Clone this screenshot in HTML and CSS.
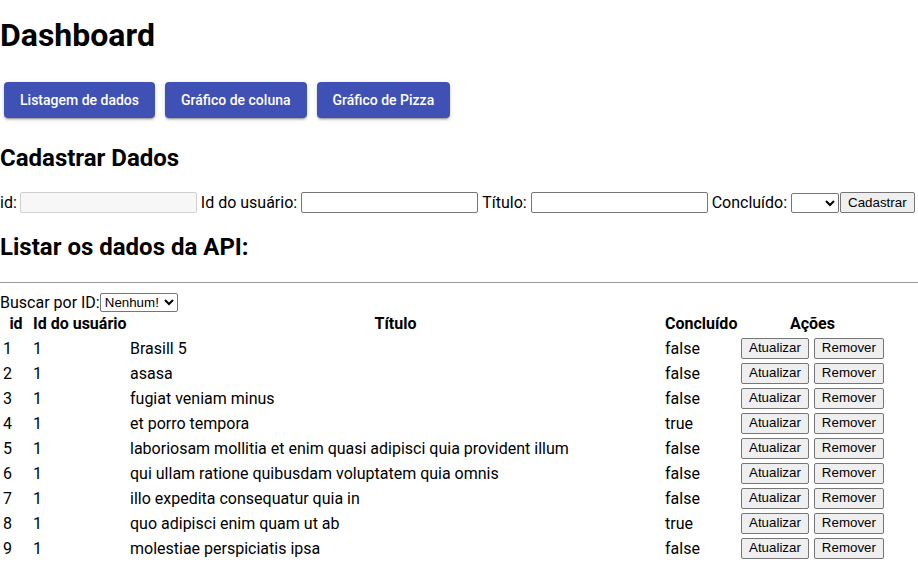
FILE: index.html
```html
<!DOCTYPE html>
<html lang="pt-BR">
<head>
<meta charset="utf-8">
<title>Dashboard</title>
<link rel="stylesheet" href="styles.css">
</head>
<body>
<h1 class="title">Dashboard</h1>
<nav class="nav">
  <button class="mui-btn">Listagem de dados</button>
  <button class="mui-btn">Gráfico de coluna</button>
  <button class="mui-btn">Gráfico de Pizza</button>
</nav>
<h2 class="section-title">Cadastrar Dados</h2>
<form class="form">
  <label class="first">id: <input class="field" type="text" disabled></label>
  <label>Id do usuário: <input class="field" type="text"></label>
  <label>Título: <input class="field" type="text"></label>
  <label>Concluído: <select class="sel-small"><option></option><option>true</option><option>false</option></select></label><button type="button" class="native-btn">Cadastrar</button>
</form>
<h2 class="section-title list-title">Listar os dados da API:</h2>
<hr class="divider">
<div class="search">Buscar por ID:<select class="sel-search"><option>Nenhum!</option></select></div>
<table class="data">
  <colgroup>
    <col class="c-id"><col class="c-user"><col class="c-title"><col class="c-done"><col class="c-act">
  </colgroup>
  <thead>
    <tr><th>id</th><th>Id do usuário</th><th>Título</th><th>Concluído</th><th>Ações</th></tr>
  </thead>
  <tbody>
    <tr><td>1</td><td>1</td><td>Brasill 5</td><td>false</td><td><button class="native-btn">Atualizar</button><button class="native-btn second">Remover</button></td></tr>
    <tr><td>2</td><td>1</td><td>asasa</td><td>false</td><td><button class="native-btn">Atualizar</button><button class="native-btn second">Remover</button></td></tr>
    <tr><td>3</td><td>1</td><td>fugiat veniam minus</td><td>false</td><td><button class="native-btn">Atualizar</button><button class="native-btn second">Remover</button></td></tr>
    <tr><td>4</td><td>1</td><td>et porro tempora</td><td>true</td><td><button class="native-btn">Atualizar</button><button class="native-btn second">Remover</button></td></tr>
    <tr><td>5</td><td>1</td><td>laboriosam mollitia et enim quasi adipisci quia provident illum</td><td>false</td><td><button class="native-btn">Atualizar</button><button class="native-btn second">Remover</button></td></tr>
    <tr><td>6</td><td>1</td><td>qui ullam ratione quibusdam voluptatem quia omnis</td><td>false</td><td><button class="native-btn">Atualizar</button><button class="native-btn second">Remover</button></td></tr>
    <tr><td>7</td><td>1</td><td>illo expedita consequatur quia in</td><td>false</td><td><button class="native-btn">Atualizar</button><button class="native-btn second">Remover</button></td></tr>
    <tr><td>8</td><td>1</td><td>quo adipisci enim quam ut ab</td><td>true</td><td><button class="native-btn">Atualizar</button><button class="native-btn second">Remover</button></td></tr>
    <tr><td>9</td><td>1</td><td>molestiae perspiciatis ipsa</td><td>false</td><td><button class="native-btn">Atualizar</button><button class="native-btn second">Remover</button></td></tr>
  </tbody>
</table>
</body>
</html>
```
FILE: styles.css
```css
html, body {
  margin: 0;
  padding: 0;
  background: #fff;
}
body {
  font-family: Roboto, "Liberation Sans", sans-serif;
  font-size: 16px;
  color: #000;
}
.title {
  font-size: 32px;
  font-weight: 700;
  margin: 17px 0 0;
  line-height: 37.5px;
}
.nav {
  display: flex;
  gap: 10px;
  padding: 27px 0 0 4px;
}
.mui-btn {
  font-family: Roboto, "Liberation Sans", sans-serif;
  font-size: 14px;
  font-weight: 500;
  line-height: 24px;
  height: 36px;
  padding: 6px 16px;
  color: #fff;
  background: #3f51b5;
  border: 0;
  border-radius: 4px;
  box-shadow: 0 3px 1px -2px rgba(0,0,0,.2), 0 2px 2px 0 rgba(0,0,0,.14), 0 1px 5px 0 rgba(0,0,0,.12);
  cursor: pointer;
}
.section-title {
  font-size: 24px;
  font-weight: 700;
  line-height: 28px;
  margin: 26px 0 0;
}
.form {
  margin: 20px 0 0;
  display: flex;
  align-items: center;
  white-space: nowrap;
  height: 22px;
}
.form label {
  margin-right: 4px;
  display: inline-flex;
  align-items: center;
  gap: 4px;
}
.form label.first {
  gap: 3px;
}
.form label:last-of-type {
  margin-right: 1px;
}
.field {
  box-sizing: border-box;
  width: 177px;
  height: 21px;
  font-family: "Liberation Sans", Arial, sans-serif;
  font-size: 13.33px;
  border: 1px solid #767676;
  border-radius: 2px;
  padding: 1px 2px;
}
.field:disabled {
  background: #f7f7f7;
  border-color: #d0d0d0;
}
.sel-small {
  box-sizing: border-box;
  width: 48px;
  height: 20px;
  font-family: "Liberation Sans", Arial, sans-serif;
  font-size: 13.33px;
  border: 1px solid #767676;
  border-radius: 2px;
  background: #fff;
}
.native-btn {
  box-sizing: border-box;
  font-family: "Liberation Sans", Arial, sans-serif;
  font-size: 13.33px;
  height: 21px;
  padding: 1px 7px;
  background: #efefef;
  color: #000;
  border: 1px solid #767676;
  border-radius: 2px;
  line-height: 16px;
  vertical-align: top;
}
.list-title {
  margin-top: 19px;
}
.divider {
  margin: 21px 0 0;
  border: 0;
  border-top: 1px solid #9a9a9a;
  height: 0;
}
.search {
  margin-top: 10px;
  display: flex;
  align-items: center;
  height: 19px;
  line-height: 19px;
}
.sel-search {
  box-sizing: border-box;
  height: 19px;
  width: 78px;
  font-family: "Liberation Sans", Arial, sans-serif;
  font-size: 13.33px;
  border: 1px solid #767676;
  border-radius: 2px;
  background: #fff;
  padding: 0;
}
.data {
  table-layout: fixed;
  width: 887px;
  border-spacing: 2px;
  margin-top: -1px;
}
.data th, .data td {
  padding: 1px;
  white-space: nowrap;
  overflow: hidden;
}
.data th {
  font-weight: 700;
  text-align: center;
  line-height: 20px;
}
.data td {
  text-align: left;
  line-height: 21px;
  height: 21px;
}
.c-id { width: 28px; }
.c-user { width: 95px; }
.c-title { width: 533px; }
.c-done { width: 74px; }
.c-act { width: 145px; }
.second {
  margin-left: 5px;
}
```
